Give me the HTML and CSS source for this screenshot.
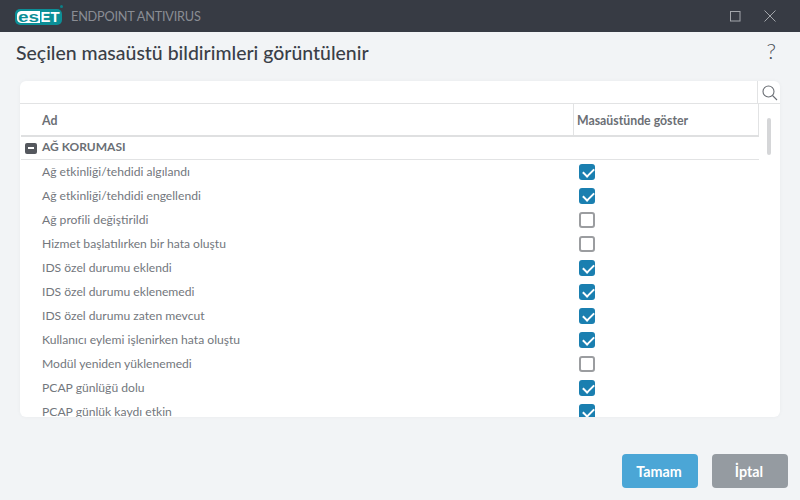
FILE: index.html
```html
<!DOCTYPE html>
<html lang="tr">
<head>
<meta charset="utf-8">
<title>ESET Endpoint Antivirus</title>
<link rel="stylesheet" href="styles.css">
</head>
<body>
<div class="window">
  <header class="titlebar">
    <div class="brand">
      <svg class="logo" width="50" height="22" viewBox="0 0 50 22">
        <rect x="0" y="4" width="47" height="16" rx="5" fill="#0c8f97"/>
        <circle cx="46.500" cy="1.500" r="1.500" fill="#0c7f87"/>
        <path d="M6 6h19v12H6a4.500 4.500 0 0 1-4-4v-4a4.500 4.500 0 0 1 4-4z" fill="#fff"/>
        <text class="logo-dark" x="3" y="16.500" textLength="21" lengthAdjust="spacingAndGlyphs">es</text>
        <text class="logo-light" x="25.500" y="16.500" textLength="19" lengthAdjust="spacingAndGlyphs">ET</text>
      </svg>
      <span class="product">ENDPOINT ANTIVIRUS</span>
    </div>
    <div class="controls">
      <svg width="11" height="11" viewBox="0 0 11 11"><rect x=".5" y=".5" width="9.500" height="9.500" fill="none" stroke="#a3a6ab"/></svg>
      <svg width="12" height="12" viewBox="0 0 12 12"><path d="M.5.500l11 11M11.500.500l-11 11" fill="none" stroke="#a3a6ab"/></svg>
    </div>
  </header>
  <div class="heading">
    <h1>Seçilen masaüstü bildirimleri görüntülenir</h1>
    <span class="help">?</span>
  </div>
  <section class="panel">
    <div class="search">
      <div class="search-field"></div>
      <div class="search-btn">
        <svg width="16" height="16" viewBox="0 0 16 16"><circle cx="6.500" cy="6.500" r="5.500" fill="none" stroke="#6a6e74" stroke-width="1.100"/><path d="M10.500 10.500l4.500 4.500" stroke="#6a6e74" stroke-width="1.100"/></svg>
      </div>
    </div>
    <div class="content">
      <div class="table">
        <div class="thead">
          <div class="th th-name">Ad</div>
          <div class="th th-show">Masaüstünde göster</div>
        </div>
        <div class="group"><span class="collapse"></span><span class="group-label">AĞ KORUMASI</span></div>
        <div class="rows">
          <div class="row"><span class="name">Ağ etkinliği/tehdidi algılandı</span><span class="check on"></span></div>
          <div class="row"><span class="name">Ağ etkinliği/tehdidi engellendi</span><span class="check on"></span></div>
          <div class="row"><span class="name">Ağ profili değiştirildi</span><span class="check"></span></div>
          <div class="row"><span class="name">Hizmet başlatılırken bir hata oluştu</span><span class="check"></span></div>
          <div class="row"><span class="name">IDS özel durumu eklendi</span><span class="check on"></span></div>
          <div class="row"><span class="name">IDS özel durumu eklenemedi</span><span class="check on"></span></div>
          <div class="row"><span class="name">IDS özel durumu zaten mevcut</span><span class="check on"></span></div>
          <div class="row"><span class="name">Kullanıcı eylemi işlenirken hata oluştu</span><span class="check on"></span></div>
          <div class="row"><span class="name">Modül yeniden yüklenemedi</span><span class="check"></span></div>
          <div class="row"><span class="name">PCAP günlüğü dolu</span><span class="check on"></span></div>
          <div class="row"><span class="name">PCAP günlük kaydı etkin</span><span class="check on"></span></div>
        </div>
      </div>
      <div class="scroll"><div class="thumb"></div></div>
    </div>
  </section>
  <footer class="footer">
    <button class="btn primary">Tamam</button>
    <button class="btn secondary">İptal</button>
  </footer>
</div>
</body>
</html>
```
FILE: styles.css
```css
* { box-sizing: border-box; }
html, body { margin: 0; padding: 0; }
body { width: 800px; height: 500px; overflow: hidden; font-family: "Lato", "Noto Sans", sans-serif; background: #f2f4f6; }
.window { display: flex; flex-direction: column; height: 500px; }
.titlebar { height: 32px; flex: none; background: #373b44; display: flex; align-items: center; justify-content: space-between; padding: 0 24px 0 15px; }
.brand { display: flex; align-items: center; gap: 6px; }
.logo { display: block; margin-top: -1px; }
.logo-dark, .logo-light { font: 700 14px "Liberation Sans", sans-serif; }
.logo-dark { fill: #0c8f97; }
.logo-light { fill: #fff; }
.product { font-size: 12.700px; color: #8a8d94; letter-spacing: -0.2px; }
.controls { display: flex; align-items: center; gap: 23px; }
.controls svg { display: block; }
.heading { height: 49px; flex: none; display: flex; align-items: center; justify-content: space-between; padding: 0 24px 9px 16px; }
h1 { margin: 0; font: 500 19.450px "Lato", sans-serif; color: #3a3f48; }
.help { font: 300 22px "Lato", sans-serif; color: #4a4f57; margin-bottom: 3px; }
.panel { height: 336px; flex: none; margin: 0 20px; background: #fff; border-radius: 6px; overflow: hidden; display: flex; flex-direction: column; box-shadow: 0 0 4px rgba(0,0,0,.04); }
.search { height: 23px; flex: none; display: flex; border-bottom: 1px solid #e2e3e4; }
.search-field { flex: 1; }
.search-btn { width: 23px; border-left: 1px solid #e2e3e4; display: flex; align-items: center; justify-content: center; padding: 1px 0 0 2px; }
.content { flex: 1; display: flex; min-height: 0; }
.table { width: 739px; flex: none; padding-left: 1px; overflow: hidden; }
.thead { height: 33px; display: flex; border-bottom: 2px solid #dfe0e1; font-size: 12.300px; font-weight: 700; color: #6b6f75; }
.th { display: flex; align-items: center; padding-top: 1px; }
.th-name { width: 553px; padding-left: 21px; border-right: 1px solid #e2e3e4; }
.th-show { flex: 1; padding-left: 3px; border-right: 1px solid #e2e3e4; }
.group { height: 23px; display: flex; align-items: center; border-bottom: 1px solid #e2e3e4; font-size: 12px; font-weight: 700; color: #6b6f75; }
.group-label { margin-bottom: 4px; }
.collapse { width: 12px; height: 11px; margin: 0 5px 0 4px; border-radius: 2px; background: #55585e; display: flex; align-items: center; justify-content: center; }
.collapse::before { content: ""; width: 6px; height: 2px; background: #fff; }
.row { height: 24px; display: flex; align-items: center; font-size: 12.130px; color: #73777d; }
.name { width: 558px; padding: 0 0 2px 21px; }
.check { width: 16px; height: 16px; border: 2px solid #9b9da0; border-radius: 3px; background: #fff; position: relative; }
.check.on { border: 0; background: #1a7fb0; }
.check.on::after { content: ""; position: absolute; left: 3.500px; top: 3.500px; width: 9px; height: 5px; border-left: 2.500px solid #fff; border-bottom: 2.500px solid #fff; transform: rotate(-45deg); }
.scroll { flex: 1; padding: 14px 0 0 8px; }
.thumb { width: 4px; height: 37px; border-radius: 2px; background: #d5d6d8; }
.footer { flex: 1; display: flex; justify-content: flex-end; gap: 14px; padding: 37px 12px 0 0; }
.btn { width: 76px; height: 34px; border: 0; border-radius: 4px; color: #fff; font: 700 14.300px "Lato", sans-serif; padding: 0 2px 0 0; }
.primary { background: #4ba6d6; }
.secondary { background: #959ba1; }
```
